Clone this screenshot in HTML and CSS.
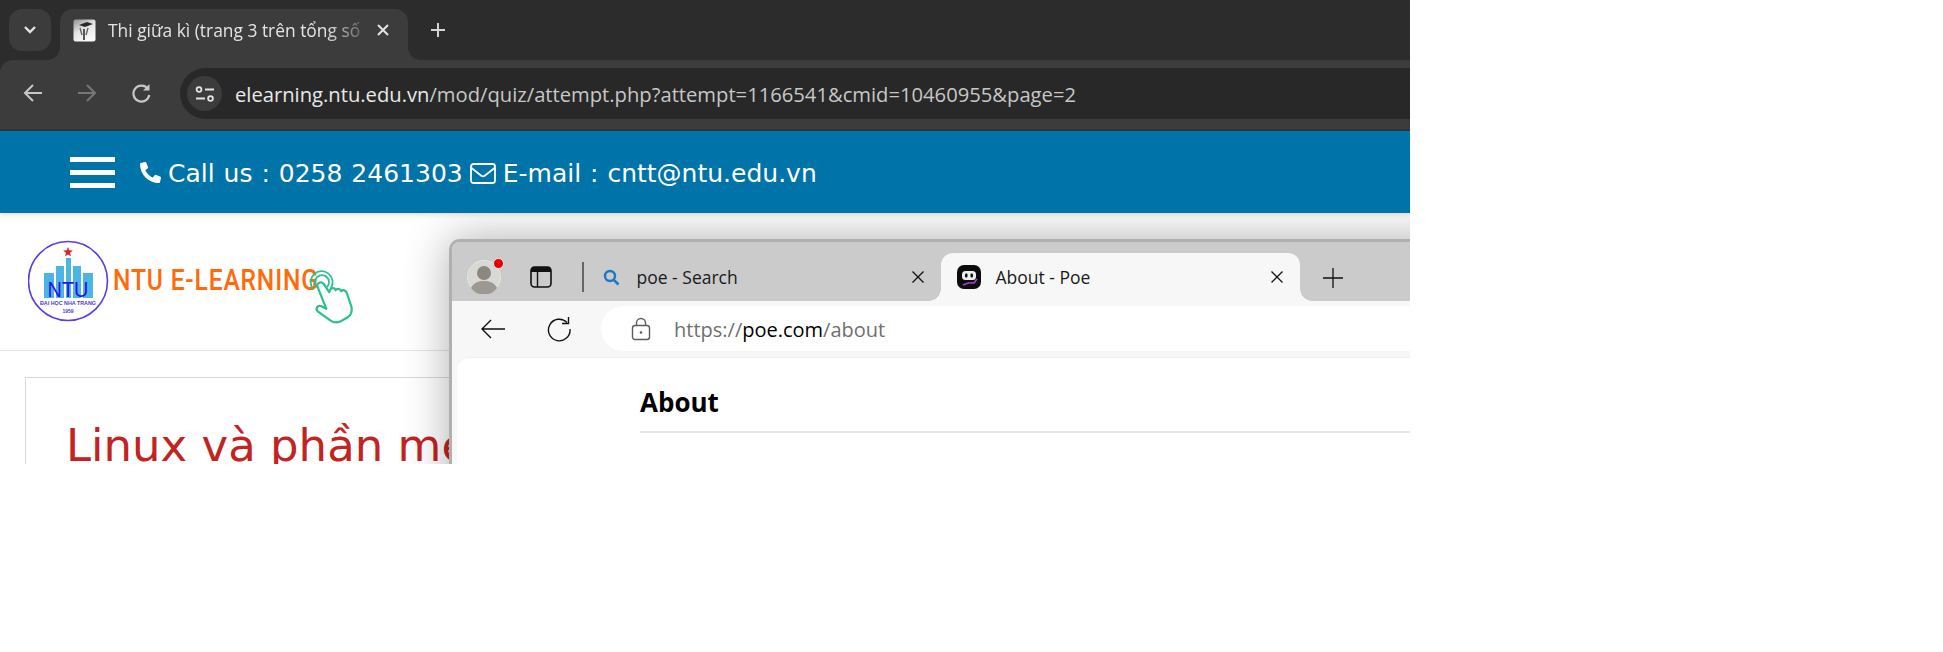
FILE: index.html
```html
<!DOCTYPE html>
<html lang="vi">
<head>
<meta charset="utf-8">
<title>Thi giữa kì</title>
<link rel="stylesheet" href="styles.css">
</head>
<body>
<div class="shot">
  <div class="chrome">
  <div class="tabstrip">
    <div class="tablist"><svg width="14" height="10" viewBox="0 0 14 10"><path d="M2 2l5 5 5-5" fill="none" stroke="#e3e3e3" stroke-width="2.4"/></svg></div>
    <div class="ctab">
      <svg class="favicon" width="23" height="23" viewBox="0 0 23 23"><defs><linearGradient id="fg" x1="0" y1="0" x2="0.6" y2="1"><stop offset="0" stop-color="#8f8f8f"/><stop offset="0.5" stop-color="#e4e4e4"/><stop offset="1" stop-color="#fafafa"/></linearGradient></defs><rect x="0.5" y="0.5" width="22" height="22" rx="2" fill="url(#fg)"/><path d="M6 6l8-3 6 2-8 3z" fill="#2a2a2a"/><path d="M7 9l2 7M15 9l-2 7" stroke="#666" stroke-width="1.4"/><path d="M11 10v11" stroke="#444" stroke-width="1.8"/></svg>
      <span class="ctab-title">Thi giữa kì (trang 3 trên tổng số</span>
      <svg class="ctab-x" width="14" height="14" viewBox="0 0 14 14"><path d="M2 2l10 10M12 2L2 12" stroke="#e3e3e3" stroke-width="2"/></svg>
    </div>
    <svg class="cplus" width="16" height="16" viewBox="0 0 16 16"><path d="M8 1v14M1 8h14" stroke="#d4d4d4" stroke-width="2"/></svg>
  </div>
  <div class="toolbar">
    <svg class="nav" width="22" height="22" viewBox="0 0 22 22"><path d="M20 11H3M11 3l-8 8 8 8" fill="none" stroke="#c7c7c7" stroke-width="2"/></svg>
    <svg class="nav" width="22" height="22" viewBox="0 0 22 22"><path d="M2 11h17M11 3l8 8-8 8" fill="none" stroke="#777" stroke-width="2"/></svg>
    <svg class="nav" width="22" height="22" viewBox="0 0 22 22"><path d="M18 7a8 8 0 1 0 1.3 6" fill="none" stroke="#c7c7c7" stroke-width="2.2"/><path d="M19.500 2v6.500H13z" fill="#c7c7c7"/></svg>
    <div class="omnibox">
      <div class="siteicon"><svg width="20" height="16" viewBox="0 0 20 16"><circle cx="4" cy="3.500" r="2.400" fill="none" stroke="#e3e3e3" stroke-width="1.800"/><path d="M10 3.500h9M1 12.500h9" stroke="#e3e3e3" stroke-width="2"/><circle cx="15.500" cy="12.500" r="2.400" fill="none" stroke="#e3e3e3" stroke-width="1.800"/></svg></div>
      <span class="url"><span class="url-host">elearning.ntu.edu.vn</span>/mod/quiz/attempt.php?attempt=1166541&amp;cmid=10460955&amp;page=2</span>
    </div>
  </div>
  </div>
  <div class="band">
    <div class="burger"><i></i><i></i><i></i></div>
    <svg class="phone" width="21" height="21" viewBox="0 0 512 512"><path transform="translate(512 0) scale(-1 1)" fill="#fff" d="M493.400 24.600l-104-24c-11.300-2.600-22.900 3.300-27.500 13.900l-48 112c-4.200 9.800-1.400 21.300 6.900 28l60.600 49.600c-36 76.700-98.900 140.500-177.200 177.200l-49.600-60.600c-6.800-8.300-18.200-11.100-28-6.900l-112 48C3.900 366.500-2 378.100.6 389.400l24 104C27.100 504.200 36.700 512 48 512c256.100 0 464-207.500 464-464 0-11.200-7.700-20.900-18.600-23.400z"/></svg>
    <span class="band-text">Call us : 0258 2461303</span>
    <svg class="mail" width="26" height="21" viewBox="0 0 26 21"><rect x="1" y="1" width="24" height="19" rx="2.500" fill="none" stroke="#fff" stroke-width="1.800"/><path d="M1.500 5l9.500 7.500c1.200 1 2.800 1 4 0L24.500 5" fill="none" stroke="#fff" stroke-width="1.800"/></svg>
    <span class="band-text">E-mail : cntt@ntu.edu.vn</span>
  </div>
  <div class="sitehead">
    <svg class="logo" width="335" height="90" viewBox="0 0 335 90">
      <circle cx="40" cy="41" r="39.500" fill="#fff" stroke="#5b3bea" stroke-width="1.600"/>
      <path d="M40 7l1.300 3.300 3.600.2-2.800 2.300.9 3.500-3-1.900-3 1.900.9-3.500-2.800-2.300 3.600-.2z" fill="#d8262c"/>
      <g class="logo-bars">
        <rect x="16" y="33" width="10" height="25"/>
        <rect x="28" y="26" width="8" height="32"/>
        <rect x="38" y="18" width="5" height="40"/>
        <rect x="45" y="26" width="8" height="32"/>
        <rect x="55" y="33" width="10" height="25"/>
      </g>
      <text x="40" y="57" class="logo-ntu" text-anchor="middle" textLength="41" lengthAdjust="spacingAndGlyphs">NTU</text>
      <text x="40" y="65" class="logo-sm" text-anchor="middle" textLength="56" lengthAdjust="spacingAndGlyphs">ĐẠI HỌC NHA TRANG</text>
      <text x="40" y="73" class="logo-xs" text-anchor="middle">1959</text>
      <text transform="translate(85 50) scale(.82 1)" class="logo-title" textLength="250" lengthAdjust="spacing">NTU E-LEARNING</text>
      <path class="logo-rings" d="M288.500 46.500a7 7 0 1 1 11 0M285 49a11 11 0 1 1 18-1"/>
      <g transform="translate(15.650 2.800) scale(.93)" fill="none" stroke="#2bc08e" stroke-linejoin="round" stroke-linecap="round">
        <path stroke-width="2.400" d="M294 46a4 4 0 0 1 7-2l6 9 1-2c1-3 5-3 6 0 1-2 5-2 6 1 2-2 5-1 6 2l5 15c1 5-1 9-4 11l-7 4c-4 2-8 2-11 0l-14-10c-3-3-1-7 3-6l6 3z"/>
      </g>
    </svg>
  </div>
  <div class="main">
    <div class="card"><h1 class="coursetitle">Linux và phần mềm</h1></div>
  </div>

  <div class="win">
    <div class="win-tabs">
      <div class="avatar">
        <svg width="34" height="34" viewBox="0 0 34 34"><circle cx="17" cy="17" r="16.500" fill="#d8d8d4" stroke="#e4e4e0"/><circle cx="17" cy="13" r="7" fill="#8b8781"/><path d="M4 28c3-6 8-7 13-7s10 1 13 7a16 16 0 0 1-26 0z" fill="#9c9892"/></svg>
        <i class="reddot"></i>
      </div>
      <svg class="vtabs" width="22" height="22" viewBox="0 0 22 22"><rect x="1" y="1" width="20" height="20" rx="3.500" fill="none" stroke="#111" stroke-width="1.600"/><path d="M1 4.500A3.500 3.500 0 0 1 4.500 1h13A3.500 3.500 0 0 1 21 4.500V6H1z" fill="#111"/><path d="M7.500 6v15" stroke="#111" stroke-width="1.400"/></svg>
      <i class="vsep"></i>
      <div class="etab">
        <svg width="17" height="17" viewBox="0 0 17 17"><circle cx="7" cy="7" r="5" fill="none" stroke="#1a78c8" stroke-width="2.400"/><path d="M10.800 10.800L15.500 15.500" stroke="#1a78c8" stroke-width="2.600"/></svg>
        <span class="etab-title">poe - Search</span>
        <svg class="etab-x" width="14" height="14" viewBox="0 0 14 14"><path d="M1.500 1.500l11 11M12.500 1.500l-11 11" stroke="#111" stroke-width="1.300"/></svg>
      </div>
      <div class="etab etab-active">
        <svg width="24" height="24" viewBox="0 0 24 24"><rect width="24" height="24" rx="7" fill="#0c0c0c"/><rect x="5" y="6" width="14" height="9" rx="3.500" fill="#eee"/><rect x="8" y="8.500" width="2.500" height="4" rx="1" fill="#111"/><rect x="13.500" y="8.500" width="2.500" height="4" rx="1" fill="#111"/><path d="M6 20l5-2h6l3-4" fill="none" stroke="#a83fd8" stroke-width="1.600"/></svg>
        <span class="etab-title">About - Poe</span>
        <svg class="etab-x" width="14" height="14" viewBox="0 0 14 14"><path d="M1.500 1.500l11 11M12.500 1.500l-11 11" stroke="#111" stroke-width="1.300"/></svg>
      </div>
      <svg class="eplus" width="22" height="22" viewBox="0 0 22 22"><path d="M11 1v20M1 11h20" stroke="#111" stroke-width="1.300"/></svg>
    </div>
    <div class="win-toolbar">
      <svg class="enav" width="26" height="22" viewBox="0 0 26 22"><path d="M25 11H2M11 2l-9 9 9 9" fill="none" stroke="#111" stroke-width="1.400"/></svg>
      <svg class="enav" width="26" height="26" viewBox="0 0 26 26"><path d="M21 6.500A10.800 10.800 0 1 0 24 13" fill="none" stroke="#111" stroke-width="1.400"/><path d="M22.500 1v6.500H16" fill="none" stroke="#111" stroke-width="1.400"/></svg>
      <div class="pill">
        <svg width="20" height="24" viewBox="0 0 20 24"><rect x="1.500" y="8.500" width="17" height="14" rx="2.500" fill="none" stroke="#5d5d5d" stroke-width="1.400"/><path d="M5.500 8.500V6a4.500 4.500 0 0 1 9 0v2.500" fill="none" stroke="#5d5d5d" stroke-width="1.400"/><circle cx="10" cy="15.500" r="1.300" fill="#5d5d5d"/></svg>
        <span class="eurl">https://<span class="eurl-host">poe.com</span>/about</span>
      </div>
    </div>
    <div class="win-page">
      <h2 class="about">About</h2>
    </div>
  </div>
</div>
</body>
</html>
```
FILE: styles.css
```css
* { box-sizing: border-box; }
html, body { margin: 0; background: #fff; }
.shot { position: relative; width: 1410px; height: 464px; overflow: hidden; background: #fff; }

.chrome { background: #2c2c2c; font-family: "Open Sans", "Noto Sans", sans-serif; }
.tabstrip { position: relative; height: 60px; display: flex; align-items: flex-start; padding: 9px 0 0 9px; }
.tablist { width: 42px; height: 42px; border-radius: 13px; background: #3c3c3c; display: flex; align-items: center; justify-content: center; }
.ctab { position: relative; width: 348px; height: 51px; margin-left: 9px; background: #3c3c3c; border-radius: 13px 13px 0 0; display: flex; align-items: flex-start; padding: 10px 0 0 13px; }
.ctab::before, .ctab::after { content: ""; position: absolute; bottom: 0; width: 12px; height: 12px; }
.ctab::before { left: -12px; background: radial-gradient(circle at 0 0, transparent 11.500px, #3c3c3c 12px); }
.ctab::after { right: -12px; background: radial-gradient(circle at 100% 0, transparent 11.500px, #3c3c3c 12px); }
.favicon { flex: none; }
.ctab-title { width: 254px; margin-left: 12px; white-space: nowrap; overflow: hidden; color: #e3e3e3; font-size: 17.400px; line-height: 22px; -webkit-mask-image: linear-gradient(to right, #000 86%, rgba(0,0,0,.25) 100%); mask-image: linear-gradient(to right, #000 86%, rgba(0,0,0,.25) 100%); }
.ctab-x { margin: 4px 0 0 14px; flex: none; }
.cplus { margin: 13px 0 0 22px; }

.toolbar { position: relative; height: 71px; background: #3c3c3c; border-radius: 13px 0 0 0; border-bottom: 2px solid #333; display: flex; align-items: center; padding: 0 0 4px 22px; gap: 32px; }
.omnibox { flex: 1; height: 51px; margin-left: -4px; margin-top: 2px; background: #282828; border-radius: 26px 0 0 26px; display: flex; align-items: center; padding-left: 7px; }
.siteicon { width: 35px; height: 35px; border-radius: 50%; background: #3c3c3c; display: flex; align-items: center; justify-content: center; }
.url { margin-left: 13px; font-size: 20.200px; color: #c7c7c7; white-space: nowrap; }
.url-host { color: #e8e8e8; }

.band { position: relative; z-index: 3; height: 82px; background: #0073a8; box-shadow: 0 2px 5px rgba(0,0,0,.12); display: flex; align-items: center; padding-left: 70px; color: #fff; font-family: "DejaVu Sans", sans-serif; }
.burger { width: 45px; display: flex; flex-direction: column; gap: 8px; margin-right: 25px; }
.burger i { display: block; height: 5px; background: #fff; }
.phone { flex: none; margin-right: 7px; }
.mail { flex: none; margin: 3px 7px 0 7px; }
.band-text { font-size: 25px; word-spacing: 1px; white-space: nowrap; padding-top: 2px; }

.sitehead { height: 138px; border-bottom: 1px solid #e4e4e4; padding: 27px 0 0 28px; }
.logo { display: block; }
.logo-bars { fill: #4db5e3; }
.logo-ntu { font: 400 22px "Liberation Sans", sans-serif; fill: #2a12e8; }
.logo-sm { font: 700 5.500px "Liberation Sans", sans-serif; fill: #4a3ae0; }
.logo-xs { font: 700 5px "Liberation Sans", sans-serif; fill: #4a3ae0; }
.logo-title { font: 500 30px "Roboto", sans-serif; fill: #ff6a0a; }
.logo-rings { fill: none; stroke: #2bc08e; stroke-width: 1.800px; stroke-linecap: round; }

.main { padding: 26px 0 0 25px; }
.card { border: 1px solid #d8d8d8; border-right: 0; height: 300px; padding: 38px 0 0 40px; }
.coursetitle { margin: 0; color: #c22323; font: 400 45px/60px "DejaVu Sans", sans-serif; white-space: nowrap; }

.win { position: absolute; z-index: 2; left: 449px; top: 239px; width: 1100px; height: 400px; background: #f7f7f7; border: 3px solid #b0b0b0; border-right: 0; border-bottom: 0; border-radius: 11px 0 0 0; box-shadow: 0 0 45px rgba(0,0,0,.32); font-family: "Open Sans", "Noto Sans", sans-serif; }
.win-tabs { height: 59px; background: #cbcbcb; border-radius: 8px 0 0 0; display: flex; align-items: flex-end; padding-left: 15px; position: relative; }
.avatar { position: relative; width: 34px; height: 34px; align-self: flex-start; margin-top: 18px; }
.avatar svg { display: block; }
.reddot { position: absolute; top: -2px; left: 26px; width: 11px; height: 11px; border-radius: 50%; background: #e80000; border: 1px solid #eee; }
.vtabs { align-self: flex-start; margin: 24px 0 0 29px; flex: none; }
.vsep { width: 1.500px; height: 30px; background: #666; align-self: flex-start; margin: 20px 0 0 30px; }
.etab { width: 357px; height: 48px; display: flex; align-items: center; padding: 0 16px 0 19px; }
.etab-title { font-size: 17.500px; margin-left: 17px; color: #1a1a1a; white-space: nowrap; }
.etab-x { margin-left: auto; flex: none; }
.etab-active { width: 359px; background: #f7f7f7; border-radius: 12px 12px 0 0; position: relative; padding: 0 16px 0 16px; }
.etab-active .etab-title { margin-left: 15px; }
.etab-active::before, .etab-active::after { content: ""; position: absolute; bottom: 0; width: 12px; height: 12px; }
.etab-active::before { left: -12px; background: radial-gradient(circle at 0 0, transparent 11.500px, #f7f7f7 12px); }
.etab-active::after { right: -12px; background: radial-gradient(circle at 100% 0, transparent 11.500px, #f7f7f7 12px); }
.eplus { align-self: flex-start; margin: 25px 0 0 22px; flex: none; }
.win-toolbar { height: 56px; display: flex; align-items: center; padding: 0 0 1px 28px; gap: 40px; }
.pill { flex: 1; height: 45px; margin-left: -11px; background: #fff; border-radius: 23px 0 0 23px; display: flex; align-items: center; padding-left: 30px; }
.eurl { margin-left: 23px; padding-top: 1px; font-size: 20px; color: #6f6f6f; white-space: nowrap; }
.eurl-host { color: #000; }
.win-page { margin-left: 5px; height: 200px; background: #fff; border-radius: 12px 0 0 0; border-top: 1px solid #eee; padding: 27px 0 0 183px; }
.about { margin: 0; padding-bottom: 12px; border-bottom: 2px solid #e8e8e8; color: #000; font-size: 26px; font-weight: 700; line-height: 34px; }
```
